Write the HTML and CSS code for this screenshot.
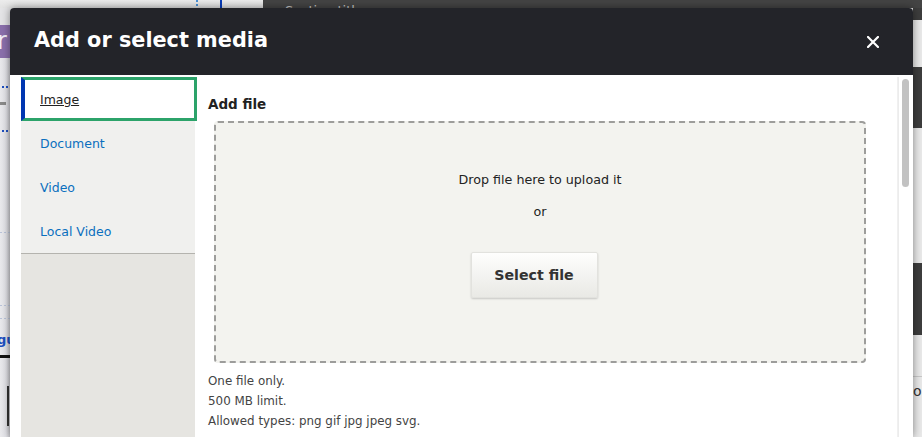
FILE: index.html
```html
<!DOCTYPE html>
<html lang="en">
<head>
<meta charset="utf-8">
<title>Add or select media</title>
<link rel="stylesheet" href="styles.css">
</head>
<body>
<div class="screen">
  <div class="topstrip">
    <div class="top-light"><span class="vdots"></span><span class="vline"></span></div>
    <div class="top-dark"><span class="sect">Section title</span></div>
  </div>
  <div class="leftstrip">
    <div class="ls-light"></div>
    <div class="ls-purple"><span>r</span></div>
    <div class="ls-rest">
      <div class="ls-dots m1"></div>
      <div class="ls-dash"></div>
      <div class="ls-dots m2"></div>
      <div class="ls-dotline m3"></div>
      <div class="ls-dotline m4"></div>
      <div class="ls-dotline m5"></div>
      <div class="ls-text">gu</div>
      <div class="ls-bar"></div>
      <div class="ls-dark"></div>
    </div>
  </div>
  <div class="dialog">
    <div class="titlebar">
      <h1 class="title">Add or select media</h1>
      <button class="close" type="button" aria-label="Close">
        <svg width="12" height="12" viewBox="0 0 12 12"><path d="M1 1L11 11M11 1L1 11" stroke="#fff" stroke-width="2.2" stroke-linecap="square"/></svg>
      </button>
    </div>
    <div class="dbody">
      <nav class="tabs">
        <ul class="tablist">
          <li class="tab active"><a href="#">Image</a></li>
          <li class="tab"><a href="#">Document</a></li>
          <li class="tab"><a href="#">Video</a></li>
          <li class="tab"><a href="#">Local Video</a></li>
        </ul>
        <div class="tabs-fill"></div>
      </nav>
      <div class="main">
        <div class="content">
          <div class="label">Add file</div>
          <div class="drop">
            <p class="drop-msg">Drop file here to upload it</p>
            <p class="drop-or">or</p>
            <button class="select" type="button">Select file</button>
          </div>
          <div class="desc">
            <div>One file only.</div>
            <div>500 MB limit.</div>
            <div>Allowed types: png gif jpg jpeg svg.</div>
          </div>
        </div>
        <div class="scrollbar"><div class="thumb"></div></div>
      </div>
    </div>
  </div>
  <div class="rightstrip">
    <div class="rs-dark h1"></div>
    <div class="rs-light h2"></div>
    <div class="rs-dark h3"></div>
    <div class="rs-light h4"></div>
    <div class="rs-dark h5"></div>
    <div class="rs-light last"><div class="rs-line"></div><div class="rs-text">io</div></div>
  </div>
</div>
</body>
</html>
```

FILE: styles.css
```css
* { box-sizing: border-box; }
html, body { margin: 0; padding: 0; }
body {
  width: 922px;
  height: 437px;
  overflow: hidden;
  font-family: "DejaVu Sans", sans-serif;
  background: #e6e6e6;
}
.screen {
  display: grid;
  grid-template-columns: 10px 903px 9px;
  grid-template-rows: 8px 429px;
  width: 922px;
  height: 437px;
}
.topstrip {
  grid-column: 1 / -1;
  display: flex;
  overflow: hidden;
}
.top-light {
  width: 263px;
  background: linear-gradient(#ececec, #e2e2e2);
  display: flex;
  gap: 22px;
  padding-left: 196px;
}
.vdots {
  width: 2px;
  background: repeating-linear-gradient(#4a90d6 0 2px, transparent 2px 4px);
}
.vline { width: 2px; background: #0a3cb8; }
.top-dark {
  flex: 1;
  background: #444444;
  padding: 3px 0 0 22px;
}
.sect {
  font-family: "DejaVu Sans", sans-serif;
  font-size: 13px;
  color: #c9c9c9;
  line-height: 16px;
  display: block;
}

/* left background strip */
.leftstrip {
  display: flex;
  flex-direction: column;
  overflow: hidden;
}
.ls-light { height: 17px; background: #e4e4e6; }
.ls-purple {
  height: 33px;
  background: #8a6fab;
  color: #f2eef7;
  font-size: 24px;
  line-height: 32px;
  overflow: hidden;
}
.ls-purple span { display: block; margin-left: -3px; }
.ls-rest {
  flex: 1;
  background: linear-gradient(90deg, #e9e9ec 0%, #e3e3e8 60%, #c9c9ce 100%);
  display: flex;
  flex-direction: column;
}
.ls-dots {
  height: 2px;
  margin-left: 2px;
  background: repeating-linear-gradient(90deg, #1d4fc0 0 2px, transparent 2px 4px);
}
.m1 { margin-top: 28px; }
.ls-dash { height: 3px; width: 6px; background: #8a8a8a; margin-top: 14px; }
.m2 { margin-top: 25px; }
.ls-dotline {
  height: 1px;
  background: repeating-linear-gradient(90deg, #b9c3d9 0 2px, transparent 2px 4px);
}
.m3 { margin-top: 100px; }
.m4 { margin-top: 72px; }
.m5 { margin-top: 12px; }
.ls-text {
  margin-top: 13px;
  margin-left: -3px;
  font-size: 13px;
  font-weight: bold;
  color: #1d4fc0;
  line-height: 16px;
}
.ls-bar { height: 3px; background: #111; margin-top: 7px; }
.ls-dark { width: 2px; height: 40px; background: #333; margin: 28px 0 0 7px; }

/* right background strip */
.rightstrip { display: flex; flex-direction: column; overflow: hidden; }
.rs-dark { background: #3d3d3d; }
.rs-light { background: #e9e9e9; }
.h1 { height: 12px; }
.h2 { height: 47px; }
.h3 { height: 61px; }
.h4 { height: 135px; }
.h5 { height: 72px; }
.last { flex: 1; }
.rs-line { height: 1px; background: #c8c8c8; margin-top: 41px; }
.rs-text {
  margin-top: 5px;
  margin-left: -4px;
  font-size: 14px;
  color: #333;
  line-height: 18px;
}

/* dialog */
.dialog {
  background: #fff;
  border-radius: 4px 4px 0 0;
  box-shadow: 0 0 8px rgba(0, 0, 0, 0.45);
  display: flex;
  flex-direction: column;
  overflow: hidden;
  position: relative;
  z-index: 1;
}
.titlebar {
  height: 67px;
  flex: none;
  background: #232429;
  display: flex;
  align-items: center;
  justify-content: space-between;
  padding: 0 34px 0 24px;
}
.title {
  margin: -3px 0 0;
  color: #fff;
  font-family: "DejaVu Sans", sans-serif;
  font-size: 20.8px;
  font-weight: bold;
  line-height: 24px;
}
.close {
  background: none;
  border: 0;
  padding: 0;
  width: 12px;
  height: 12px;
  display: flex;
  margin-top: 1px;
}
.dbody {
  flex: 1;
  display: flex;
  padding: 2px 0 0 11px;
  min-height: 0;
}

/* tabs */
.tabs {
  width: 174px;
  flex: none;
  display: flex;
  flex-direction: column;
  background: #f0f0ee;
}
.tablist { list-style: none; margin: 0; padding: 0; }
.tab {
  height: 44px;
  display: flex;
  align-items: center;
  padding-left: 19px;
  font-size: 12.5px;
}
.tab a { color: #0b6fbe; text-decoration: none; }
.tab.active {
  background: #fff;
  width: 176px;
  border: 3px solid #2ca36a;
  border-left: 4px solid #0036b1;
  padding-left: 15px;
  position: relative;
  z-index: 1;
}
.tab.active a { color: #222; text-decoration: underline; }
.tabs-fill {
  flex: 1;
  background: #e6e5e1;
  border-top: 1px solid #b4b3ae;
}

/* main */
.main {
  flex: 1;
  display: flex;
  min-width: 0;
}
.content {
  flex: 1;
  padding: 19px 0 0 13px;
  border-right: 1px solid #f0f0f0;
}
.label {
  font-size: 13.5px;
  font-weight: bold;
  color: #222;
  line-height: 16px;
}
.drop {
  margin: 9px 0 0 6px;
  width: 652px;
  height: 242px;
  background: #f3f3ef;
  border: 2px dashed #9d9d9b;
  border-radius: 4px;
  display: flex;
  flex-direction: column;
  align-items: center;
  color: #222;
}
.drop-msg {
  margin: 49px 0 0;
  font-size: 12.7px;
  line-height: 16px;
}
.drop-or {
  margin: 16px 0 0;
  font-size: 12.7px;
  line-height: 16px;
}
.select {
  margin: 32px 12px 0 0;
  width: 127px;
  height: 46px;
  font-family: "DejaVu Sans", sans-serif;
  font-size: 14.2px;
  font-weight: bold;
  color: #333;
  background: linear-gradient(#fefefd, #e9e9e5);
  border: 1px solid #e2e2de;
  border-radius: 2px;
  box-shadow: 0 1px 2px rgba(0, 0, 0, 0.18);
  padding: 0;
}
.desc {
  margin-top: 8px;
  font-size: 11.9px;
  line-height: 20px;
  color: #444;
}
.scrollbar {
  width: 15px;
  flex: none;
  border-left: 1px solid #ececec;
  padding: 2px 4px 0 3px;
}
.thumb {
  height: 108px;
  background: #c2c2c2;
  border-radius: 4px;
}
```
